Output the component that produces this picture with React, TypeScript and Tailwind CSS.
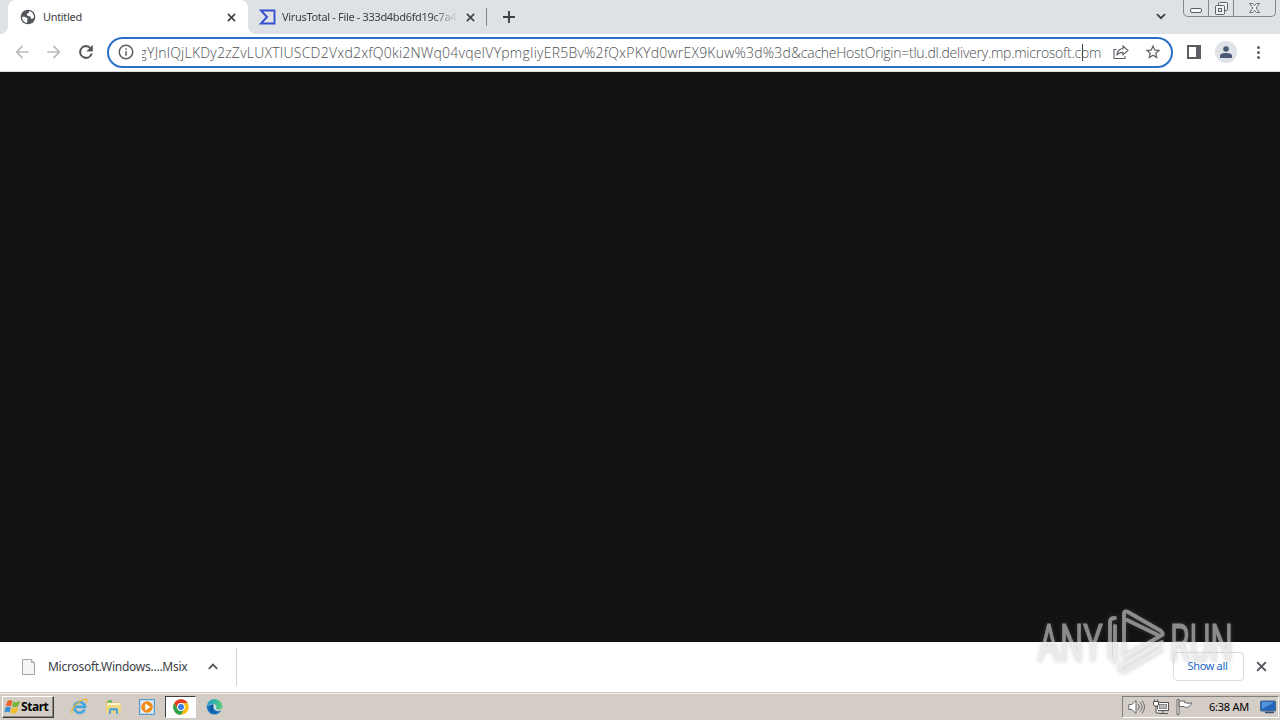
import type { ReactNode } from "react";

const UI_FONT = "font-['Noto_Sans','Open_Sans',sans-serif]";

const URL_TOKEN = "gYJnlQjLKDy2zZvLUXTIUSCD2Vxd2xfQ0ki2NWq04vqeIVYpmgIiyER5Bv%2fQxPKYd0wrEX9Kuw%3d%3d";
const URL_ORIGIN = "&cacheHostOrigin=tlu.dl.delivery.mp.microsoft.com";

function Glyph({ size = 16, className = "", children }: { size?: number; className?: string; children: ReactNode }) {
  return (
    <svg width={size} height={size} viewBox="0 0 24 24" fill="currentColor" className={`block shrink-0 ${className}`}>
      {children}
    </svg>
  );
}

function CloseIcon({ size = 10, className = "" }: { size?: number; className?: string }) {
  return (
    <svg width={size} height={size} viewBox="0 0 10 10" className={`block shrink-0 ${className}`}>
      <path d="M1 1l8 8M9 1L1 9" stroke="currentColor" strokeWidth="1.8" />
    </svg>
  );
}

function WindowControls() {
  return (
    <div className="flex h-[17px] w-[93px] rounded-b-[5px] border border-t-0 border-[#85888f] text-[#5b5f66]">
      <div className="flex w-[25px] items-end justify-center border-r border-[#85888f] pb-[3px]">
        <div className="h-[5px] w-[12px] rounded-[2px] border border-[#5b5f66] bg-[#f7f7f8]" />
      </div>
      <div className="flex w-[25px] justify-center border-r border-[#85888f] pt-[2px]">
        <svg width="13" height="13" viewBox="0 0 13 13" fill="#eef0f3" stroke="currentColor">
          <rect x="3.5" y=".5" width="9" height="8" rx="1" />
          <rect x=".5" y="3.5" width="9" height="9" rx="1" />
          <rect x="3.5" y="6.5" width="3" height="3" />
        </svg>
      </div>
      <div className="flex flex-1 justify-center pt-[3px]">
        <svg width="11" height="10" viewBox="0 0 12 11" fill="#f2f3f5" stroke="currentColor">
          <path d="M.6.5h3.2L6 3 8.2.5h3.2L7.8 5.5l3.6 5H8.2L6 8l-2.2 2.5H.6l3.6-5z" />
        </svg>
      </div>
    </div>
  );
}

function TabStrip() {
  return (
    <div className="flex h-[34px] bg-[#dee1e6] text-[#3c4043]">
      <div className="flex w-[8px] items-end bg-white">
        <div className="h-full w-full rounded-br-[8px] bg-[#dee1e6]" />
      </div>
      <div className="flex bg-[linear-gradient(to_bottom,#dee1e6_50%,#fff_50%)]">
        <div className="flex w-[240px] items-center rounded-t-[8px] bg-white pl-[12px] pr-[12px]">
          <Glyph className="text-[#54585d]">
            <circle cx="12" cy="12" r="11" />
            <path fill="#fff" d="M3 12c3-1 6 0 8 2 1 2-1 3 0 5l-1 2c-4-1-7-5-7-9zM14 3l-1 3-3 1 1 3 4 1 2 4 3-1 1-2c0-4-3-8-7-9z" />
          </Glyph>
          <span className="ml-[7px] flex-1 text-[11px] leading-4 tracking-[-0.32px]">Untitled</span>
          <CloseIcon size={9} />
        </div>
      </div>
      <div className="bg-white">
        <div className="flex h-full w-[238px] items-center rounded-bl-[8px] bg-[#dee1e6] pl-[11px] pr-[11px]">
          <svg width="17" height="16" viewBox="0 0 17 16" fill="none" stroke="#3450d0" strokeWidth="1.9">
            <path d="M2 1.5h13.5v13H2l6-6.5z" />
          </svg>
          <span className="ml-[6px] w-[176px] overflow-hidden whitespace-nowrap text-[11px] leading-4 tracking-[-0.33px] [mask-image:linear-gradient(to_right,#000_150px,transparent)]">
            VirusTotal - File - 333d4bd6fd19c7a4
          </span>
          <CloseIcon size={9} className="ml-auto" />
        </div>
      </div>
      <div className="mt-[8px] h-[18px] w-px bg-[#85898f]" />
      <svg width="12" height="12" viewBox="0 0 12 12" className="ml-[16px] mt-[11px]">
        <path d="M6 0v12M0 6h12" stroke="#3c4043" strokeWidth="1.9" />
      </svg>
      <div className="ml-auto flex">
        <svg width="10" height="7" viewBox="0 0 10 7" className="mr-[17px] mt-[13px]" fill="none">
          <path d="M1 1.2l4 4 4-4" stroke="#3c4043" strokeWidth="1.8" />
        </svg>
        <WindowControls />
        <div className="w-[4px]" />
      </div>
    </div>
  );
}

function Toolbar() {
  return (
    <div className="flex h-[38px] items-center border-b border-[#dcdcdc] bg-white pb-px text-[#5a5e63]">
      <Glyph size={20} className="ml-[12px] text-[#b9bbbe]">
        <path d="M20 11H7.8l5.6-5.6L12 4l-8 8 8 8 1.4-1.4L7.8 13H20z" />
      </Glyph>
      <Glyph size={20} className="ml-[12px] text-[#b9bbbe]">
        <path d="M4 11h12.2l-5.6-5.6L12 4l8 8-8 8-1.4-1.4 5.6-5.6H4z" />
      </Glyph>
      <Glyph size={20} className="ml-[12px] text-[#505459]">
        <path
          stroke="currentColor"
          strokeWidth=".5"
          d="M17.65 6.35A8 8 0 1 0 19.73 14h-2.08A6 6 0 1 1 12 6c1.66 0 3.14.69 4.22 1.78L13 11h7V4z"
        />
      </Glyph>
      <div className="ml-[11px] flex h-[31px] w-[1066px] items-center rounded-full border-2 border-[#2a70c8] pl-[8px] pr-[9px]">
        <Glyph size={18}>
          <path d="M11 7h2v2h-2zm0 4h2v6h-2zm1-9a10 10 0 1 0 0 20 10 10 0 0 0 0-20zm0 18a8 8 0 1 1 0-16 8 8 0 0 1 0 16z" />
        </Glyph>
        <div className="relative ml-[7px] flex h-[22px] w-[961px] items-center justify-end overflow-hidden pt-[2px]">
          <span className="whitespace-nowrap font-['Open_Sans',sans-serif] text-[14px] font-light leading-5 text-[#4c5054]">
            <span className="tracking-[0.22px]">{URL_TOKEN}</span>
            <span className="tracking-[-0.25px]">{URL_ORIGIN}</span>
          </span>
          <span className="absolute right-[18px] top-[3px] h-[17px] w-px bg-[#444]" />
        </div>
        <svg width="16" height="14" viewBox="0 0 16 14" className="ml-[12px] block" fill="none" stroke="currentColor" strokeWidth="1.1">
          <path d="M3.5 4.5H1v9h11V11" />
          <path d="M10 1l5 4.5-5 4.3V7.4c-3 0-5 .9-6.3 2.9C4 7 6 4 10 3.6z" />
        </svg>
        <Glyph size={18} className="ml-[15px]">
          <path d="M22 9.24l-7.19-.62L12 2 9.19 8.63 2 9.24l5.46 4.73L5.82 21 12 17.27 18.18 21l-1.63-7.03zM12 15.4l-3.76 2.27 1-4.28-3.32-2.88 4.38-.38L12 6.1l1.71 4.04 4.38.38-3.32 2.88 1 4.28z" />
        </Glyph>
      </div>
      <div className="ml-[14px] h-[14px] w-[14px] border-2 border-r-[5px] border-[#5a5e63]" />
      <div className="ml-[14px] flex h-[22px] w-[22px] items-center justify-center rounded-full bg-[#dfe2e7]">
        <svg width="12" height="12" viewBox="0 0 12 12" fill="#4a5775">
          <circle cx="6" cy="3" r="2.8" />
          <path d="M0 12V9.6C0 7.8 3.4 7 6 7s6 .8 6 2.6V12z" />
        </svg>
      </div>
      <div className="ml-[20px] flex w-[3px] flex-col gap-[2px]">
        <i className="h-[3px] rounded-full bg-[#5a5e63]" />
        <i className="h-[3px] rounded-full bg-[#5a5e63]" />
        <i className="h-[3px] rounded-full bg-[#5a5e63]" />
      </div>
    </div>
  );
}

function DownloadShelf() {
  return (
    <div className="flex h-[51px] items-center border-b border-[#c9c9c9] bg-white pb-[1px] text-[#3c4043]">
      <svg width="14" height="16" viewBox="0 0 14 16" className="ml-[22px]" fill="#f5f5f5" stroke="#a4a4a4">
        <path d="M.5.5h9l3 3v12H.5z" />
        <path d="M9.5.5v3h3" fill="#ddd" />
      </svg>
      <span className="ml-[12px] w-[140px] whitespace-nowrap text-[12px] tracking-[-0.26px]">Microsoft.Windows....Msix</span>
      <svg width="10" height="7" viewBox="0 0 10 7" className="ml-[20px]" fill="none">
        <path d="M.8 5.8L5 1.6l4.2 4.2" stroke="#54585d" strokeWidth="1.8" />
      </svg>
      <div className="ml-[18px] h-[38px] w-px bg-[#d2d2d2]" />
      <div className="ml-auto flex h-[29px] w-[71px] items-center justify-center rounded-[4px] border border-[#dadce0] pr-[2px] text-[11px] tracking-[-0.35px] text-[#1967c8]">
        Show all
      </div>
      <CloseIcon size={11} className="ml-[12px] mr-[13px] text-[#54585d]" />
    </div>
  );
}

function WindowsFlag() {
  return (
    <svg width="17" height="16" viewBox="0 0 17 16">
      <path d="M3.2 2.2C5 1 7 1 8.4 2L7.1 7.2C5.4 6.4 3.6 6.5 1.9 7.5z" fill="#e8642a" />
      <path d="M9.3 2.5C11 3.5 13.5 3.4 16 1.8L14.5 7C12.5 8.4 10 8.6 8 7.6z" fill="#7cb63c" />
      <path d="M1.6 8.5C3.4 7.5 5.2 7.4 6.9 8.3L5.6 13.3C3.8 12.4 2 12.5.3 13.6z" fill="#3a8fd8" />
      <path d="M7.7 8.6C9.9 9.6 12.2 9.4 14.3 8.1L13 13.2C10.8 14.7 8.5 14.8 6.4 13.7z" fill="#f5bf2c" />
    </svg>
  );
}

function ExplorerBrowserIcon() {
  return (
    <svg width="17" height="17" viewBox="0 0 17 17" fill="none">
      <path d="M13.6 11.6A5.4 5.4 0 1 1 14 8.9H4" stroke="#43a5df" strokeWidth="2.6" />
      <path d="M1.2 15.5C-1 12 7 2.5 13.5 1.3c3-.4 2.7 2 1.5 4" stroke="#e8b83a" strokeWidth="1.3" />
    </svg>
  );
}

function FolderIcon() {
  return (
    <svg width="17" height="16" viewBox="0 0 17 16">
      <path d="M1 2h5l1 1.500h8V14H1z" fill="#dcb95c" />
      <path d="M3 1h4v3H3z" fill="#79b96d" />
      <path d="M2 4h13v3H2z" fill="#fbf3cf" />
      <path d="M1 6h15v8H1z" fill="#efd780" />
      <path d="M4 15v-4.500Q4 9 5.500 9h6Q13 9 13 10.500V15h-2v-3.500H6V15z" fill="#55a5da" />
    </svg>
  );
}

function MediaIcon() {
  return (
    <svg width="16" height="16" viewBox="0 0 16 16">
      <rect x=".5" y=".5" width="15" height="15" fill="#b9d8ef" stroke="#5c9bc8" />
      <rect x="2" y="2" width="12" height="12" fill="#e2eef7" />
      <circle cx="8" cy="8" r="5.8" fill="#f38b19" />
      <path d="M6.2 4.600L11.400 8l-5.200 3.400z" fill="#fff" />
    </svg>
  );
}

function ChromeIcon() {
  return (
    <svg width="16" height="16" viewBox="0 0 16 16">
      <circle cx="8" cy="8" r="7.8" fill="#fbc116" />
      <path d="M1.240 4.100A7.800 7.800 0 0 1 14.760 4.100H8A3.900 3.900 0 0 0 4.620 9.950z" fill="#e33b2e" />
      <path d="M1.240 4.100A7.800 7.800 0 0 0 8 15.800l3.380-5.850A3.900 3.900 0 0 1 4.620 9.950z" fill="#2da14c" />
      <circle cx="8" cy="8" r="3.9" fill="#fff" />
      <circle cx="8" cy="8" r="3" fill="#3b7ded" />
    </svg>
  );
}

function EdgeIcon() {
  return (
    <svg width="17" height="17" viewBox="0 0 17 17">
      <defs>
        <linearGradient id="edgeTop" x1="0" x2="1">
          <stop offset="0" stopColor="#1d9bdc" />
          <stop offset="1" stopColor="#58cf72" />
        </linearGradient>
      </defs>
      <path d="M.6 8C1 13 4 16.500 8.500 16.500c3.200 0 5.500-1.500 6.900-3.900-3 1.300-6.700.6-7.400-2.400L7 6z" fill="#1672be" />
      <path d="M.6 8A8 8 0 0 1 16.500 8c0 2.600-2 3.700-4.300 3.700-1.800 0-2.700-.8-2.200-1.500C11.300 8 9.600 6 6.900 6 4 6 1.500 7 .6 8z" fill="url(#edgeTop)" />
      <path d="M8 7.500c-3.500 2.500-1.500 7 2 7.300-5 .8-8-4.800-4-7.600z" fill="#124f98" />
      <path d="M8 7.700c1.600-.2 2.600 1 2 2.400-.5 1 .6 1.600 2.200 1.600-2.800 1-5.500-1.500-4.200-4z" fill="#d5e3ec" />
    </svg>
  );
}

function Tray() {
  return (
    <div className="mr-[1px] flex h-[22px] w-[157px] items-center border border-b-white border-l-[#808080] border-r-white border-t-[#808080] pl-[5px]">
      <svg width="17" height="16" viewBox="0 0 17 16" fill="#fff" stroke="#666" strokeWidth="1">
        <path d="M.8 5.500h3L8 1.500v13l-4.200-4h-3z" />
        <path d="M10 5c1.500 2 1.500 4 0 6M12 3.300c2.700 3 2.700 6.400 0 9.400M14 1.800c3.300 4 3.300 8.400 0 12.400" fill="none" />
      </svg>
      <svg width="17" height="16" viewBox="0 0 17 16" className="ml-[8px]" fill="#fff" stroke="#555">
        <rect x="4.5" y="3.5" width="11" height="8" />
        <rect x="6.5" y="5.5" width="7" height="4" fill="#b7b7b7" stroke="#888" />
        <path d="M10 12v2.500M6 14.500h9" />
        <path d="M.5 2.500h5v3.500l-1.500 1h-2L.5 6zM1.500.5v2M4.500.5v2M3 7v7h3" />
      </svg>
      <svg width="17" height="16" viewBox="0 0 17 16" className="ml-[6px]" fill="#fff" stroke="#666">
        <path d="M1 .5h2v15H1zM3 2h5.500v1.500c2.500 1 4.500 1 7 .2-.8 3-3 5-6 4.800L8 7.500H3z" />
      </svg>
      <span className="ml-[16px] w-[42px] whitespace-nowrap text-[11px] leading-4 tracking-[-0.25px] text-black">6:38 AM</span>
      <svg width="16" height="14" viewBox="0 0 16 14" className="ml-[9px]">
        <rect x=".5" y="1" width="15" height="10" rx="1" fill="#2567bd" stroke="#44678c" />
        <path d="M2 2h12L2 9z" fill="#5695dd" />
        <path d="M5 12.500h9" stroke="#345174" strokeWidth="1.5" />
      </svg>
    </div>
  );
}

function Taskbar() {
  return (
    <div className="flex h-[27px] items-center border-t border-[#f3f1ed] bg-[#d4cdc6] pb-px">
      <div className="ml-[2px] flex h-[22px] w-[52px] items-center border border-b-[#404040] border-l-white border-r-[#404040] border-t-white pl-px shadow-[inset_-1px_-1px_0_#8b8580]">
        <WindowsFlag />
        <span className="text-[12px] font-bold leading-4 tracking-[-0.45px] text-black">Start</span>
      </div>
      <div className="ml-[17px] flex items-center gap-[17px]">
        <ExplorerBrowserIcon />
        <FolderIcon />
        <MediaIcon />
      </div>
      <div className="ml-[10px] flex h-[22px] w-[31px] items-center justify-center border border-b-white border-l-[#404040] border-r-white border-t-[#404040] bg-white">
        <ChromeIcon />
      </div>
      <div className="ml-[10px]">
        <EdgeIcon />
      </div>
      <div className="ml-auto">
        <Tray />
      </div>
    </div>
  );
}

function Watermark() {
  return (
    <svg
      width="204"
      height="68"
      viewBox="0 0 204 68"
      className="pointer-events-none absolute bottom-[45px] right-[40px] overflow-visible opacity-60 drop-shadow-[0_0_2px_rgba(120,120,120,0.6)]"
      fill="#dedede"
    >
      <g fontFamily="Roboto" fontSize="52" stroke="#dedede" strokeWidth=".8">
        <text x="2" y="54" textLength="65" lengthAdjust="spacingAndGlyphs">ANY</text>
        <text x="134" y="54" textLength="63" lengthAdjust="spacingAndGlyphs">RUN</text>
      </g>
      <g fill="none" stroke="#dedede" strokeWidth="3.8" strokeLinejoin="round" strokeLinecap="round">
        <path d="M74 50V15q0-4 5-4M79 19v36" />
        <path d="M88 18V7q0-4 4-2l33 19q4 4-1 5L91 13M88 18v32l38-22" />
        <path d="M126 35L88 57q-5 3-4 6 2 3 7 0l34-20" />
      </g>
    </svg>
  );
}

export default function App() {
  return (
    <div className={`relative flex h-[720px] w-[1280px] flex-col overflow-hidden ${UI_FONT}`}>
      <TabStrip />
      <Toolbar />
      <main className="flex-1 bg-[#121212]" />
      <DownloadShelf />
      <Taskbar />
      <Watermark />
    </div>
  );
}
